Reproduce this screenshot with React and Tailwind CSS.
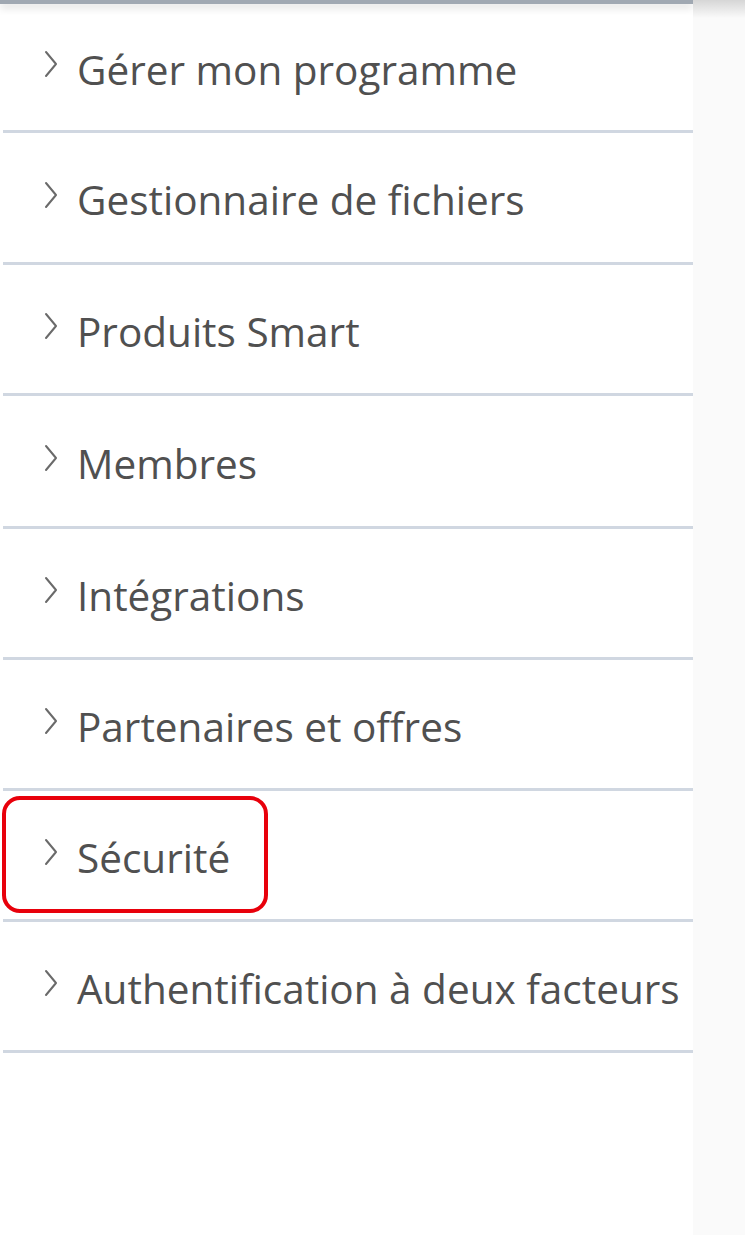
const items = [
  { label: 'Gérer mon programme', h: 'h-[129px]' },
  { label: 'Gestionnaire de fichiers', h: 'h-[132px]' },
  { label: 'Produits Smart', h: 'h-[131px]' },
  { label: 'Membres', h: 'h-[133px]' },
  { label: 'Intégrations', h: 'h-[131px]' },
  { label: 'Partenaires et offres', h: 'h-[131px]' },
  { label: 'Sécurité', h: 'h-[131px]' },
  { label: 'Authentification à deux facteurs', h: 'h-[131px]' },
]

function Chevron() {
  return (
    <svg width="16" height="28" viewBox="0 0 16 28" className="shrink-0 ml-[40px] -mt-[12px]">
      <polyline points="3,2 13,14 3,26" fill="none" stroke="#6a6a6a" strokeWidth="2" strokeLinecap="round" strokeLinejoin="round" />
    </svg>
  )
}

export default function App() {
  return (
    <div className="flex w-[745px] h-[1235px] bg-[#fafafa] overflow-hidden" style={{ fontFamily: '"Open Sans", "Noto Sans", sans-serif' }}>
      {/* Menu */}
      <div className="w-[693px] h-full bg-white flex flex-col">
        <div className="h-[4px] bg-[#a0a8b2] shadow-[0_3px_9px_rgba(0,0,0,0.2)]" />
        <ul className="flex flex-col">
          {items.map(({ label, h }) => (
            <li key={label} className={`relative flex items-center pt-[6px] border-b-[3px] border-[#d0d7e1] ml-[3px] ${h}`}>
              <Chevron />
              <span className="ml-[18px] text-[40.5px] text-[#505050]">{label}</span>
              {label === 'Sécurité' && (
                <div className="absolute left-[-1px] top-[5px] w-[266px] h-[117px] rounded-[18px] border-[4px] border-[#e8000b]" />
              )}
            </li>
          ))}
        </ul>
      </div>
      {/* Right strip */}
      <div className="flex-1 flex flex-col">
        <div className="h-[18px] bg-gradient-to-b from-[#d6d6d6] to-[#fafafa]" />
      </div>
    </div>
  )
}
